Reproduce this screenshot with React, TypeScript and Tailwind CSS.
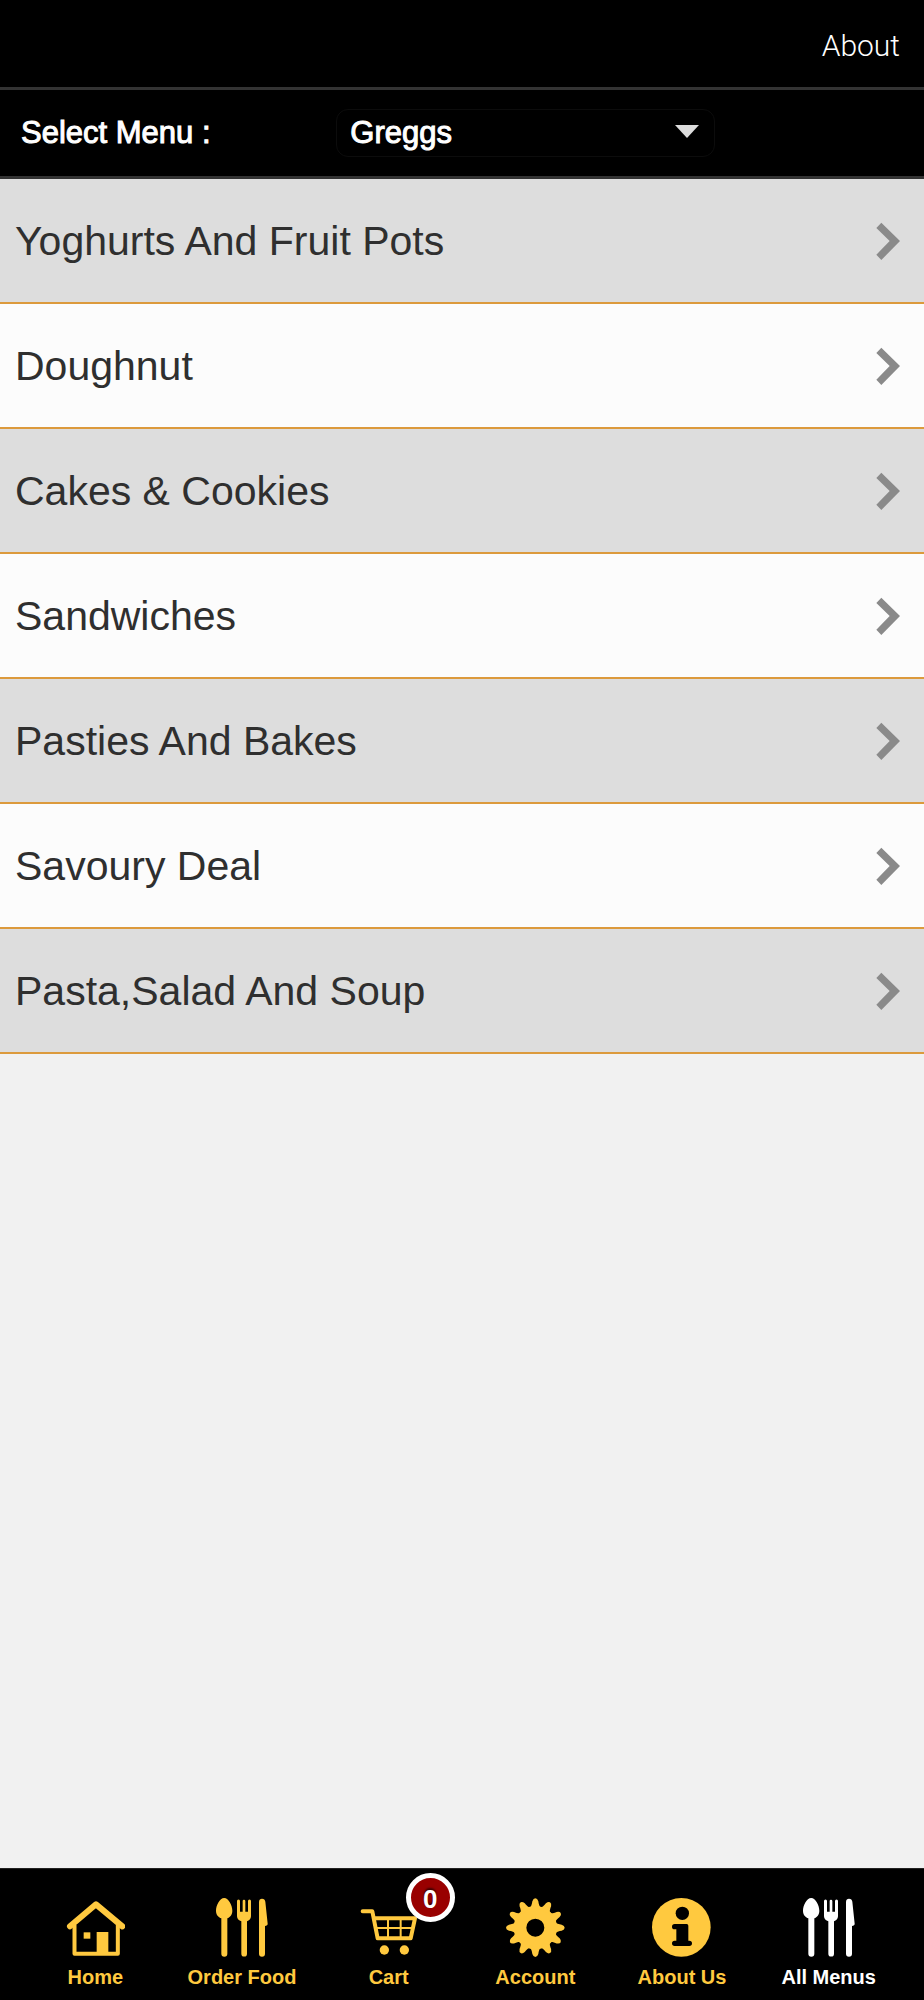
import React, { useState } from 'react'

const categories = [
  'Yoghurts And Fruit Pots',
  'Doughnut',
  'Cakes & Cookies',
  'Sandwiches',
  'Pasties And Bakes',
  'Savoury Deal',
  'Pasta,Salad And Soup',
]

function Icon({ children }: { children: React.ReactNode }) {
  return (
    <svg viewBox="0 0 180 180" className="size-[60px]" fill="currentColor" aria-hidden="true">
      {children}
    </svg>
  )
}

function HomeIcon() {
  return (
    <Icon>
      <path d="M15 88 93 22l79 66" fill="none" stroke="currentColor" strokeWidth="18" strokeLinecap="round" strokeLinejoin="round" />
      <path d="M28.500 84V170.500H158.500V84" fill="none" stroke="currentColor" strokeWidth="12" strokeLinejoin="round" />
      <rect x="56" y="106" width="20" height="19" />
      <rect x="95" y="105" width="35" height="64" />
    </Icon>
  )
}

function UtensilsIcon() {
  return (
    <Icon>
      <path d="M36.500 3C50 3 61 26 61 41c0 12-7 20-15 23v106a9 9 0 0 1-18 0V64c-9-3-16-11-16-23C12 26 23 3 36.500 3Z" />
      <path d="M75 12a4 4 0 0 1 9 0v32h8V12a4 4 0 0 1 8 0v32h8V12a4 4 0 0 1 9 0v46c0 8-6 13-12 15v97a8.500 8.500 0 0 1-17 0V73c-7-2-13-7-13-15Z" />
      <path d="M141 15c0-7 4-10 9-10 6 0 9 3 10 9l7 66c0 4-3 6-8 7v83a8.500 8.500 0 0 1-18 0Z" />
    </Icon>
  )
}

function CartIcon() {
  return (
    <Icon>
      <g fill="none" stroke="currentColor" strokeWidth="12" strokeLinejoin="round" strokeLinecap="round">
        <path d="M11 43H40L56 124H155L168 64H45" />
        <path d="M50 93H162M87 64V124M125 64V124" strokeWidth="6" />
      </g>
      <circle cx="76" cy="159" r="14" />
      <circle cx="136" cy="159" r="14" />
    </Icon>
  )
}

function GearIcon() {
  const teeth = Array.from({ length: 12 }, (_, i) => i * 30)
  return (
    <Icon>
      <circle cx="91" cy="92" r="46" fill="none" stroke="currentColor" strokeWidth="38" />
      {teeth.map((angle) => (
        <path
          key={angle}
          d="M72 36C79 30 81 20 82 13Q85 4 91 4T100 13C101 20 103 30 110 36Z"
          transform={`rotate(${angle} 91 92)`}
        />
      ))}
    </Icon>
  )
}

function InfoIcon() {
  return (
    <Icon>
      <circle cx="88" cy="91" r="88" />
      <g className="fill-black">
        <circle cx="91" cy="49" r="20" />
        <path d="M68 81H104Q109 81 109 86V131H112a8 8 0 0 1 0 16H68a8 8 0 0 1 0-16H73V97H68a8 8 0 0 1 0-16Z" />
      </g>
    </Icon>
  )
}

const navItems = [
  { label: 'Home', icon: HomeIcon },
  { label: 'Order Food', icon: UtensilsIcon },
  { label: 'Cart', icon: CartIcon, badge: 0 },
  { label: 'Account', icon: GearIcon },
  { label: 'About Us', icon: InfoIcon },
  { label: 'All Menus', icon: UtensilsIcon, active: true },
]

export default function App() {
  const [menu, setMenu] = useState('Greggs')

  return (
    <div className="flex min-h-screen flex-col bg-[#f1f1f1] font-['Liberation_Sans',Arial,sans-serif]">
      <header className="bg-black text-white">
        <div className="flex h-[90px] items-center justify-end border-b-3 border-[#333] px-6 pt-1">
          <a href="#about" className="font-[Roboto,sans-serif] text-[30px] font-light leading-10">
            About
          </a>
        </div>
        <div className="flex h-[89px] items-center border-b-3 border-[#333] text-[31px] leading-10 [-webkit-text-stroke:1px_white]">
          <label htmlFor="menu" className="w-[36.4%] pl-[21px]">
            Select Menu :
          </label>
          <div className="relative w-[41%]">
            <select
              id="menu"
              value={menu}
              onChange={(e) => setMenu(e.target.value)}
              className="h-12 w-full appearance-none rounded-xl border border-[#0c0c0c] bg-black pl-[13px] pr-12"
            >
              <option>Greggs</option>
            </select>
            <svg
              viewBox="0 0 24 13"
              className="pointer-events-none absolute right-4 top-4 h-[13px] w-6 fill-[#ddd]"
              aria-hidden="true"
            >
              <path d="M0 0H24L12 13Z" />
            </svg>
          </div>
        </div>
      </header>

      <main className="flex-1">
        <ul>
          {categories.map((name) => (
            <li key={name} className="border-b-2 border-[#dc9a3c] odd:bg-[#ddd] even:bg-[#fcfcfc]">
              <a
                href="#category"
                className="flex h-[123px] items-center justify-between pl-[15px] pr-6 text-[41px] leading-[48px] text-[#2f2f2f]"
              >
                {name}
                <svg viewBox="0 0 72 114" className="h-[38px] w-6 fill-[#8a8a8a]" aria-hidden="true">
                  <path d="M16 2 72 57 16 114 1 98 41 57 1 18Z" />
                </svg>
              </a>
            </li>
          ))}
        </ul>
      </main>

      <nav className="grid h-[132px] grid-cols-6 border-t border-[#222] bg-black px-[22px] pt-7">
        {navItems.map(({ label, icon: NavIcon, badge, active }) => (
          <a
            key={label}
            href="#nav"
            className={`flex flex-col items-center gap-2 text-xl font-bold leading-6 ${active ? 'text-white' : 'text-[#ffc93f]'}`}
          >
            <span className="relative">
              <NavIcon />
              {badge !== undefined && (
                <span className="absolute -top-6 left-[47px] flex size-[49px] items-center justify-center rounded-full border-[5px] border-white bg-[#990000] pt-0.5 text-[26px] text-white [text-shadow:0_-2px_2px_rgba(0,0,0,0.6)]">
                  {badge}
                </span>
              )}
            </span>
            {label}
          </a>
        ))}
      </nav>
    </div>
  )
}
